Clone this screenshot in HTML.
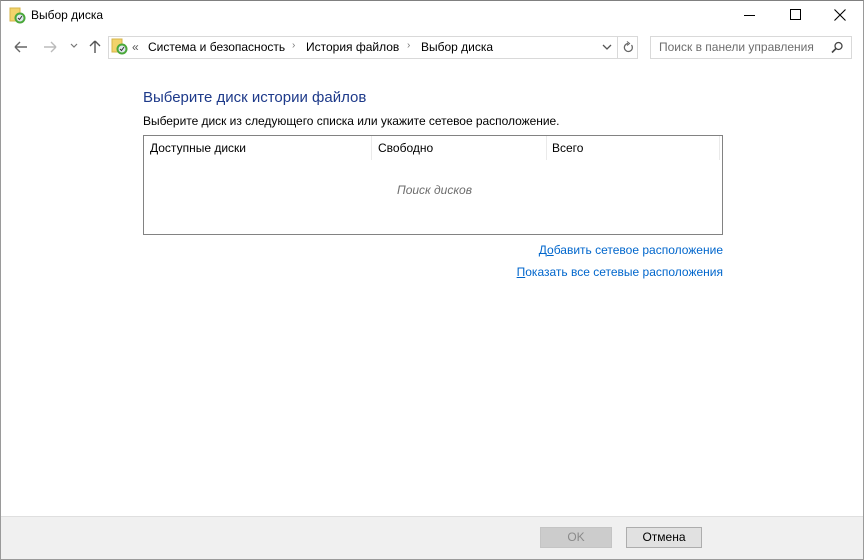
<!DOCTYPE html>
<html><head><meta charset="utf-8"><style>
*{margin:0;padding:0;box-sizing:border-box}
body{width:864px;height:560px;background:#fff;font-family:"Liberation Sans","DejaVu Sans",sans-serif;font-size:12px;color:#000;position:relative;overflow:hidden}
.a{position:absolute;white-space:nowrap}
.frame{position:absolute;left:0;top:0;width:864px;height:560px;border:1px solid #9a9a9a;border-top-color:#808080}
</style></head><body>
<svg class="a" style="left:9px;top:7px" width="18" height="18" viewBox="0 0 18 18">
<rect x="1" y="1" width="10" height="13" fill="#f2d36b" stroke="#d6b44a"/>
<circle cx="11" cy="11" r="5.5" fill="#4aa83a"/><circle cx="11" cy="11" r="3.5" fill="#dfe7ef"/>
<path d="M9 11l1.5 1.5L13 9" stroke="#333" stroke-width="1" fill="none"/></svg>
<div class="a" style="left:31px;top:8px;font-size:12px">Выбор диска</div>
<div class="a" style="left:744px;top:15px;width:11px;height:1px;background:#000"></div>
<div class="a" style="left:790px;top:9px;width:11px;height:11px;border:1px solid #000"></div>
<svg class="a" style="left:834px;top:9px" width="12" height="12"><path d="M0.5 0.5L11.5 11.5M11.5 0.5L0.5 11.5" stroke="#000" stroke-width="1.1"/></svg>
<svg class="a" style="left:14px;top:40px" width="14" height="14"><path d="M1 7H13M1 7L6 2M1 7L6 12" stroke="#666" stroke-width="1.4" fill="none"/></svg>
<svg class="a" style="left:43px;top:40px" width="14" height="14"><path d="M1 7H13M13 7L8 2M13 7L8 12" stroke="#bbb" stroke-width="1.4" fill="none"/></svg>
<svg class="a" style="left:70px;top:43px" width="8" height="6"><path d="M1 1L4 4L7 1" stroke="#777" stroke-width="1.2" fill="none"/></svg>
<svg class="a" style="left:88px;top:40px" width="14" height="14"><path d="M7 13V1M7 1L2 6M7 1L12 6" stroke="#555" stroke-width="1.4" fill="none"/></svg>
<div class="a" style="left:108px;top:36px;width:510px;height:23px;border:1px solid #d9d9d9"></div>
<svg class="a" style="left:111px;top:38px" width="18" height="18" viewBox="0 0 18 18">
<rect x="1" y="1" width="10" height="13" fill="#f2d36b" stroke="#d6b44a"/>
<circle cx="11" cy="11" r="5.5" fill="#4aa83a"/><circle cx="11" cy="11" r="3.5" fill="#dfe7ef"/>
<path d="M9 11l1.5 1.5L13 9" stroke="#333" stroke-width="1" fill="none"/></svg>
<div class="a" style="left:132px;top:40px;color:#555">«</div>
<div class="a" style="left:148px;top:40px">Система и безопасность</div>
<div class="a" style="left:292px;top:40px;color:#777;font-size:10px">›</div>
<div class="a" style="left:306px;top:40px">История файлов</div>
<div class="a" style="left:407px;top:40px;color:#777;font-size:10px">›</div>
<div class="a" style="left:421px;top:40px">Выбор диска</div>
<svg class="a" style="left:602px;top:44px" width="10" height="7"><path d="M1 1L5 5L9 1" stroke="#555" stroke-width="1.3" fill="none"/></svg>
<div class="a" style="left:618px;top:36px;width:20px;height:23px;border:1px solid #d9d9d9;border-left:none"></div>
<svg class="a" style="left:622px;top:41px" width="12" height="12"><path d="M9.5 4A4 4 0 1 1 6 2.5" stroke="#666" stroke-width="1.2" fill="none"/><path d="M5 0.5L7.5 2.5L5 4.5" stroke="#666" stroke-width="1.1" fill="none"/></svg>
<div class="a" style="left:650px;top:36px;width:202px;height:23px;border:1px solid #d9d9d9"></div>
<div class="a" style="left:659px;top:40px;color:#6d6d6d">Поиск в панели управления</div>
<svg class="a" style="left:831px;top:41px" width="13" height="13"><circle cx="7.5" cy="5" r="3.5" stroke="#444" stroke-width="1.3" fill="none"/><path d="M5 7.5L1 11.5" stroke="#444" stroke-width="1.6"/></svg>
<div class="a" style="left:143px;top:89px;font-size:15px;color:#1e3a8a">Выберите диск истории файлов</div>
<div class="a" style="left:143px;top:114px;font-size:12px;letter-spacing:-0.03px">Выберите диск из следующего списка или укажите сетевое расположение.</div>
<div class="a" style="left:143px;top:135px;width:580px;height:100px;border:1px solid #828282"></div>
<div class="a" style="left:371px;top:136px;width:1px;height:24px;background:#eaeaea"></div>
<div class="a" style="left:546px;top:136px;width:1px;height:24px;background:#eaeaea"></div>
<div class="a" style="left:719px;top:136px;width:1px;height:24px;background:#eaeaea"></div>
<div class="a" style="left:150px;top:141px">Доступные диски</div>
<div class="a" style="left:378px;top:141px">Свободно</div>
<div class="a" style="left:552px;top:141px">Всего</div>
<div class="a" style="left:397px;top:183px;font-style:italic;color:#6d6d6d">Поиск дисков</div>
<div class="a" style="right:141px;top:243px;color:#0066cc">Д<u>о</u>бавить сетевое расположение</div>
<div class="a" style="right:141px;top:265px;color:#0066cc"><u>П</u>оказать все сетевые расположения</div>
<div class="a" style="left:0;top:516px;width:864px;height:44px;background:#f0f0f0;border-top:1px solid #dfdfdf"></div>
<div class="a" style="left:540px;top:527px;width:72px;height:21px;background:#cccccc;border:1px solid #c4c4c4;color:#8a8a8a;text-align:center;line-height:19px">OK</div>
<div class="a" style="left:626px;top:527px;width:76px;height:21px;background:#e1e1e1;border:1px solid #adadad;text-align:center;line-height:19px">Отмена</div>
<div class="frame"></div>
</body></html>
